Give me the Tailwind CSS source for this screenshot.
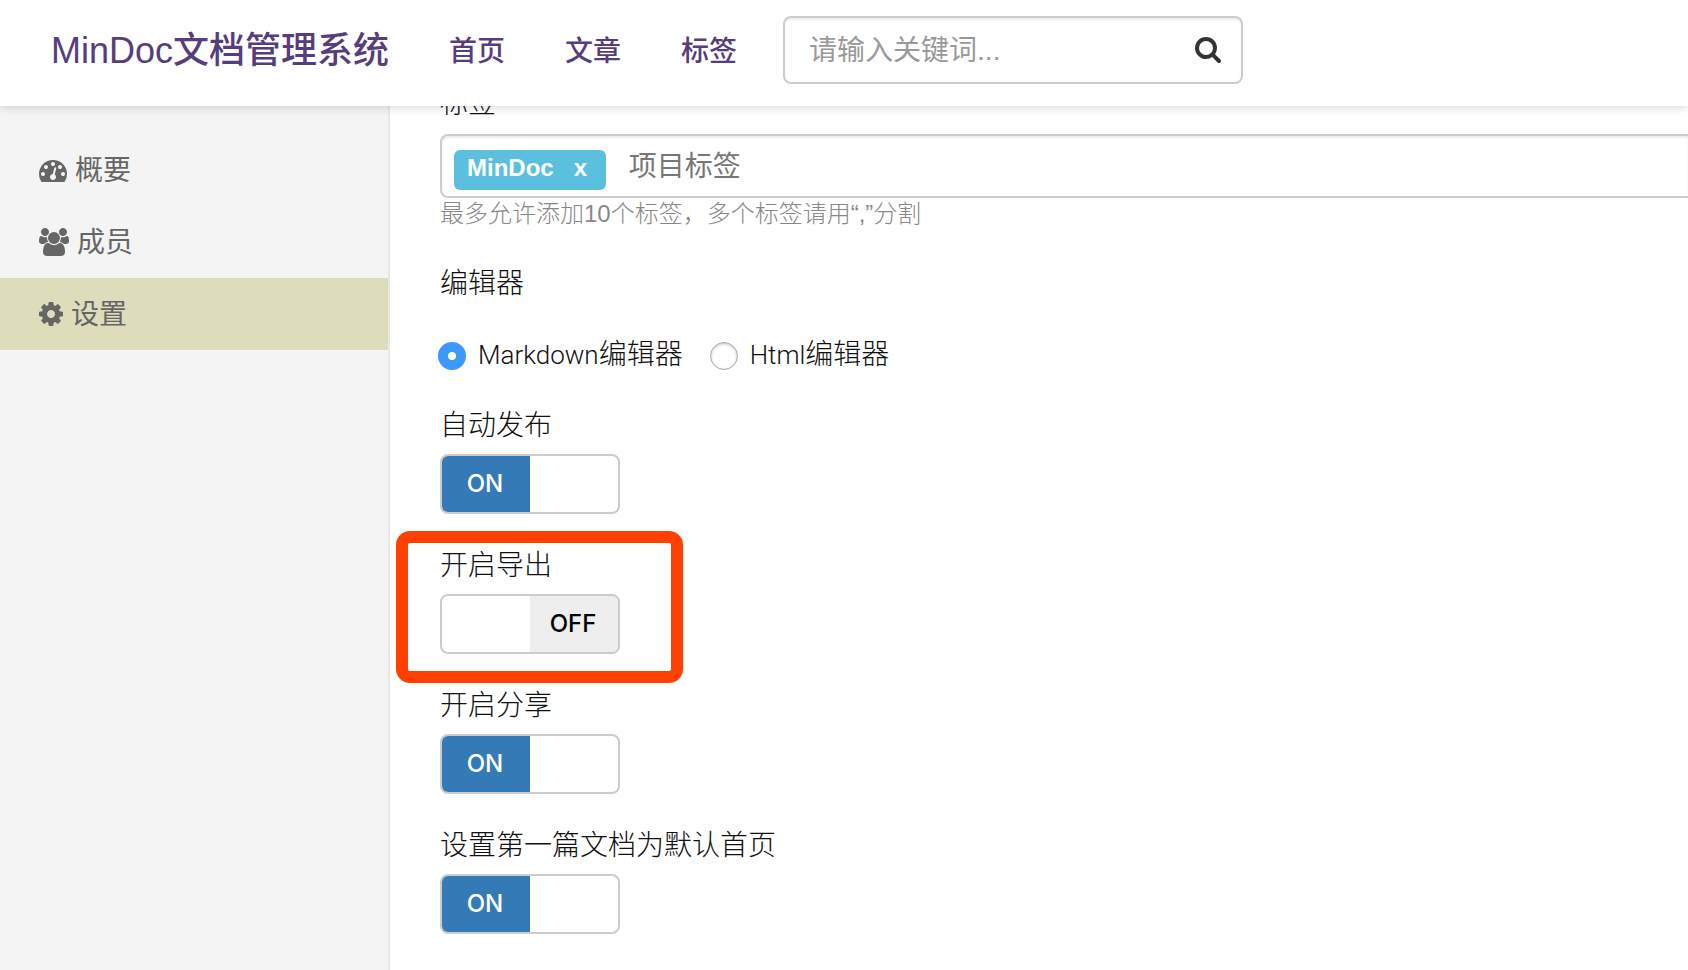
<!DOCTYPE html>
<html lang="zh-CN">
<head>
<meta charset="utf-8">
<meta name="viewport" content="width=device-width, initial-scale=1">
<title>MinDoc文档管理系统</title>
<script src="https://cdn.jsdelivr.net/npm/@tailwindcss/browser@4"></script>
</head>
<body class="flex min-h-screen flex-col bg-white font-['Liberation_Sans','Noto_Sans_CJK_SC',sans-serif] text-[28px] leading-10 text-[#111]">

<header class="relative z-10 flex h-[106px] items-start bg-white pl-[51px] shadow-[0_0_10px_rgba(0,0,0,0.2)]">
  <a href="#" class="mt-[26px] text-4xl leading-[50px] font-medium whitespace-nowrap text-[#563d7c]">MinDoc文档管理系统</a>
  <nav class="mt-8 ml-[30px] flex font-medium whitespace-nowrap text-[#563d7c]">
    <a href="#" class="px-[30px]">首页</a>
    <a href="#" class="px-[30px]">文章</a>
    <a href="#" class="px-[30px]">标签</a>
  </nav>
  <form class="mt-4 ml-4 flex h-[68px] w-[460px] items-center rounded-lg border-2 border-[#ccc] pr-5 pl-6 shadow-[inset_0_2px_2px_rgba(0,0,0,0.075)]">
    <input type="search" aria-label="关键词" placeholder="请输入关键词..." class="h-11 min-w-0 flex-1 bg-transparent pt-0.5 outline-none placeholder:text-[#999]">
    <button type="button" aria-label="搜索" class="text-[#333]">
      <svg class="size-[26px]" viewBox="64 128 1664 1664" fill="currentColor"><path d="M1216 832q0-185-131.5-316.5t-316.5-131.5-316.5 131.5-131.5 316.5 131.5 316.5 316.5 131.5 316.5-131.5 131.5-316.5zm512 832q0 52-38 90t-90 38q-54 0-90-38l-343-342q-179 124-399 124-143 0-273.5-55.5t-225-150-150-225-55.5-273.5 55.5-273.5 150-225 225-150 273.5-55.5 273.5 55.5 225 150 150 225 55.5 273.5q0 220-124 399l343 343q37 37 37 90z"/></svg>
    </button>
  </form>
</header>

<div class="flex flex-1">
  <aside class="w-[390px] shrink-0 border-r-2 border-[#e7e7e7] bg-[#f4f4f4] pt-7 text-[#666]">
    <nav>
      <a href="#" class="flex h-[72px] items-center gap-2 pl-[39px]">
        <svg class="mt-0.5 h-[22px] w-7" viewBox="0 256 1792 1408" fill="currentColor"><path d="M384 1152q0-53-37.500-90.500t-90.500-37.500-90.500 37.500-37.500 90.500 37.500 90.500 90.500 37.500 90.500-37.500 37.500-90.500zm192-448q0-53-37.500-90.500t-90.500-37.500-90.500 37.500-37.500 90.500 37.500 90.500 90.500 37.500 90.500-37.500 37.500-90.500zm428 481l101-382q6-26-7.500-48.500t-38.500-29.500-48 6.500-30 39.500l-101 382q-60 5-107 43.500t-63 98.500q-20 77 20 146t117 89 146-20 89-117q16-60-6-117t-72-91zm660-33q0-53-37.500-90.500t-90.500-37.500-90.500 37.500-37.500 90.500 37.500 90.500 90.500 37.500 90.500-37.500 37.500-90.500zm-640-640q0-53-37.500-90.500t-90.500-37.500-90.500 37.500-37.500 90.500 37.500 90.500 90.500 37.500 90.500-37.500 37.500-90.500zm448 192q0-53-37.500-90.500t-90.500-37.500-90.500 37.500-37.500 90.500 37.500 90.500 90.500 37.500 90.500-37.500 37.500-90.500zm320 448q0 261-141 483-19 29-54 29h-1402q-35 0-54-29-141-221-141-483 0-182 71-348t191-286 286-191 348-71 348 71 286 191 191 286 71 348z"/></svg>
        <span class="pt-0.5">概要</span>
      </a>
      <a href="#" class="flex h-[72px] items-center gap-2 pl-[39px]">
        <svg class="h-7 w-[30px]" viewBox="-64 0 1920 1792" fill="currentColor"><path d="M529 896q-162 5-265 128h-134q-82 0-138-40.500t-56-118.500q0-353 124-353 6 0 43.500 21t97.500 42.500 119 21.500q67 0 133-23-5 37-5 66 0 139 81 256zm1071 637q0 120-73 189.500t-194 69.500h-874q-121 0-194-69.500t-73-189.500q0-53 3.500-103.500t14-109 26.500-108.500 43-97.500 62-81 85.500-53.500 111.500-20q10 0 43 21.500t73 48 107 48 135 21.500 135-21.500 107-48 73-48 43-21.500q61 0 111.500 20t85.500 53.500 62 81 43 97.500 26.500 108.500 14 109 3.500 103.500zm-1024-1277q0 106-75 181t-181 75-181-75-75-181 75-181 181-75 181 75 75 181zm704 384q0 159-112.500 271.500t-271.500 112.500-271.500-112.500-112.500-271.500 112.500-271.500 271.500-112.500 271.500 112.500 112.500 271.500zm576 225q0 78-56 118.500t-138 40.500h-134q-103-123-265-128 81-117 81-256 0-29-5-66 66 23 133 23 59 0 119-21.500t97.500-42.500 43.500-21q124 0 124 353zm-128-609q0 106-75 181t-181 75-181-75-75-181 75-181 181-75 181 75 75 181z"/></svg>
        <span class="pt-0.5">成员</span>
      </a>
      <a href="#" aria-current="page" class="flex h-[72px] items-center gap-2 bg-[#ddddbb] pl-[39px]">
        <svg class="size-6" viewBox="128 128 1536 1536" fill="currentColor"><path d="M1152 896q0-106-75-181t-181-75-181 75-75 181 75 181 181 75 181-75 75-181zm512-109v222q0 12-8 23t-20 13l-185 28q-19 54-39 91 35 50 107 138 10 12 10 25t-9 23q-27 37-99 108t-94 71q-12 0-26-9l-138-108q-44 23-91 38-16 136-29 186-7 28-36 28h-222q-14 0-24.500-8.500t-11.500-21.500l-28-184q-49-16-90-37l-141 107q-10 9-25 9-14 0-25-11-126-114-165-168-7-10-7-23 0-12 8-23 15-21 51-66.500t54-70.500q-27-50-41-99l-183-27q-13-2-21-12.500t-8-23.500v-222q0-12 8-23t19-13l186-28q14-46 39-92-40-57-107-138-10-12-10-24 0-10 9-23 26-36 98.500-107.500t94.500-71.500q13 0 26 10l138 107q44-23 91-38 16-136 29-186 7-28 36-28h222q14 0 24.500 8.500t11.500 21.500l28 184q49 16 90 37l142-107q9-9 24-9 13 0 25 10 129 119 165 170 7 8 7 22 0 12-8 23-15 21-51 66.500t-54 70.500q26 50 41 98l183 28q13 2 21 12.500t8 23.500z"/></svg>
        <span class="pt-0.5">设置</span>
      </a>
    </nav>
  </aside>

  <main class="min-w-0 flex-1 pl-[50px] font-['Roboto','Noto_Sans_CJK_SC',sans-serif] font-light">
    <!-- First row is scrolled partly under the header -->
    <label for="tags" class="-mt-[22px] block">标签</label>
    <div class="mt-2.5 flex h-16 items-center rounded-l-lg border-2 border-r-0 border-[#ccc] pl-3 font-['Liberation_Sans','Noto_Sans_CJK_SC',sans-serif] font-normal shadow-[inset_0_2px_2px_rgba(0,0,0,0.075)]">
      <span class="mt-2 flex h-10 items-center gap-5 rounded-md bg-[#5bc0de] px-[13px] pb-1 text-2xl font-bold text-white">MinDoc<button type="button" aria-label="移除 MinDoc" class="w-[19px] text-left">x</button></span>
      <input id="tags" type="text" placeholder="项目标签" class="ml-[23px] h-11 min-w-0 flex-1 bg-transparent pt-0.5 outline-none placeholder:text-[#777]">
    </div>
    <p class="text-2xl leading-8 text-[#888] font-['Liberation_Sans','Noto_Sans_CJK_SC',sans-serif]">最多允许添加10个标签，多个标签请用“,”分割</p>

    <fieldset class="mt-[34px]">
      <legend>编辑器</legend>
      <div class="mt-[31px] -ml-0.5 flex items-center gap-[27px]">
        <label class="flex items-center"><input type="radio" name="editor" checked class="mt-0.5 mr-3 size-7 appearance-none rounded-full border border-[#aaa] shadow-[inset_0_1px_3px_rgba(0,0,0,0.25)] checked:border-[10px] checked:border-[#3b99fc] checked:shadow-none"><span><span class="text-[26px]">Markdown</span>编辑器</span></label>
        <label class="flex items-center"><input type="radio" name="editor" class="mt-0.5 mr-3 size-7 appearance-none rounded-full border border-[#aaa] shadow-[inset_0_1px_3px_rgba(0,0,0,0.25)] checked:border-[10px] checked:border-[#3b99fc] checked:shadow-none"><span><span class="text-[26px]">Html</span>编辑器</span></label>
      </div>
    </fieldset>

    <div class="mt-[31px] flex flex-col items-start gap-8 pb-9">
      <label class="flex flex-col gap-2">自动发布
        <input type="checkbox" role="switch" checked class="peer sr-only">
        <span class="flex h-[60px] w-[180px] overflow-hidden rounded-lg border-2 border-[#ccc] bg-white font-['Inter',sans-serif] text-2xl font-medium"><span class="flex w-1/2 items-center justify-center bg-[#337ab7] pr-0.5 text-white">ON</span></span>
      </label>
      <label class="relative flex flex-col gap-2">开启导出
        <input type="checkbox" role="switch" class="peer sr-only">
        <span class="flex h-[60px] w-[180px] justify-end overflow-hidden rounded-lg border-2 border-[#ccc] bg-white font-['Inter',sans-serif] text-2xl font-medium"><span class="flex w-1/2 items-center justify-center bg-[#eee] pr-0.5 text-black">OFF</span></span>
        <span class="pointer-events-none absolute -top-[15px] -right-[63px] -bottom-[29px] -left-11 rounded-[14px] border-12 border-[#ff4000]"></span>
      </label>
      <label class="flex flex-col gap-2">开启分享
        <input type="checkbox" role="switch" checked class="peer sr-only">
        <span class="flex h-[60px] w-[180px] overflow-hidden rounded-lg border-2 border-[#ccc] bg-white font-['Inter',sans-serif] text-2xl font-medium"><span class="flex w-1/2 items-center justify-center bg-[#337ab7] pr-0.5 text-white">ON</span></span>
      </label>
      <label class="flex flex-col gap-2">设置第一篇文档为默认首页
        <input type="checkbox" role="switch" checked class="peer sr-only">
        <span class="flex h-[60px] w-[180px] overflow-hidden rounded-lg border-2 border-[#ccc] bg-white font-['Inter',sans-serif] text-2xl font-medium"><span class="flex w-1/2 items-center justify-center bg-[#337ab7] pr-0.5 text-white">ON</span></span>
      </label>
    </div>
  </main>
</div>
</body>
</html>
